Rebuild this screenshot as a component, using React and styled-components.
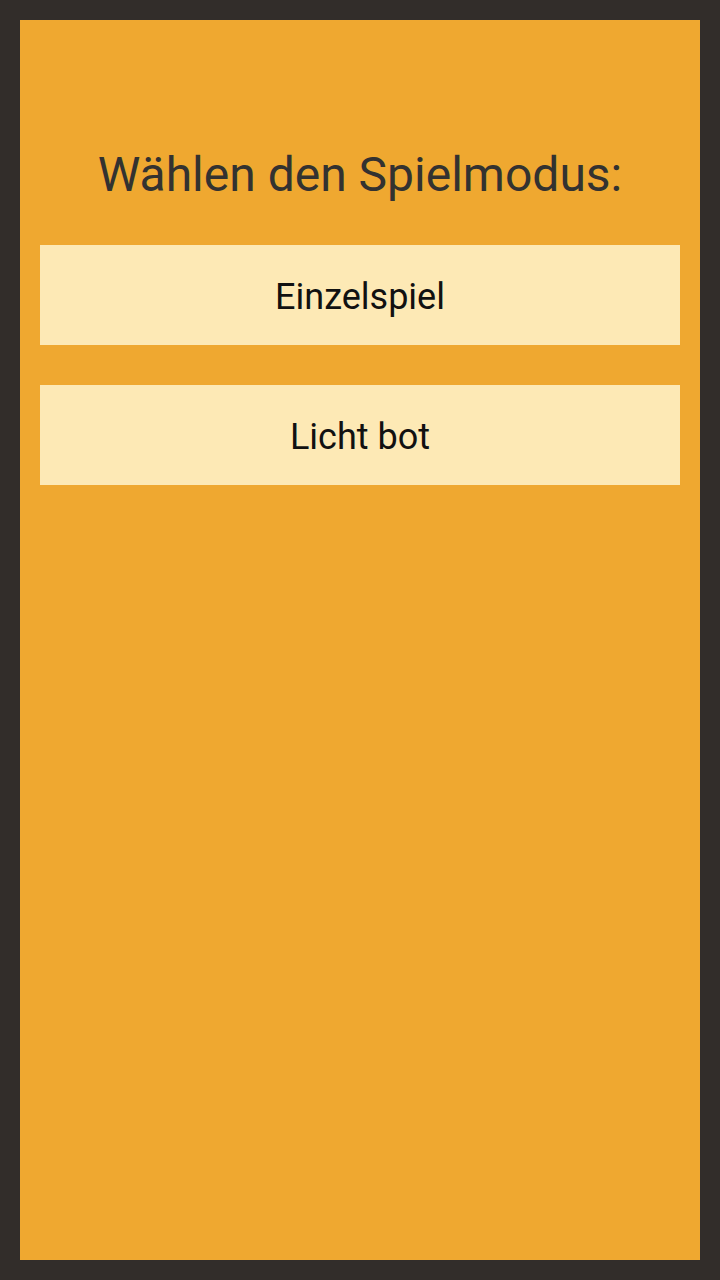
import React from "react";
import styled, { createGlobalStyle } from "styled-components";

const Global = createGlobalStyle`
  html, body { margin: 0; padding: 0; background: #322d2a; }
  body { font-family: Roboto, "Noto Sans", sans-serif; }
`;

const Frame = styled.div`
  width: 720px;
  height: 1280px;
  box-sizing: border-box;
  padding: 20px;
  background: #322d2a;
`;

const Panel = styled.main`
  height: 100%;
  background: #efa830;
  box-sizing: border-box;
  padding: 20px;
  display: flex;
  flex-direction: column;
  gap: 40px;
`;

const Title = styled.h1`
  margin: 0 0 2px;
  padding-top: 107px;
  font-weight: 400;
  font-size: 48px;
  line-height: 56px;
  color: #333230;
  text-align: center;
`;

const ModeButton = styled.button`
  height: 100px;
  border: none;
  background: #fde9b5;
  font-family: Roboto, "Noto Sans", sans-serif;
  font-size: 36px;
  color: #111;
  padding: 4px 0 0;
`;

export default function App() {
  return (
    <>
      <Global />
      <Frame>
        <Panel>
          <Title>Wählen den Spielmodus:</Title>
          <ModeButton>Einzelspiel</ModeButton>
          <ModeButton>Licht bot</ModeButton>
        </Panel>
      </Frame>
    </>
  );
}
